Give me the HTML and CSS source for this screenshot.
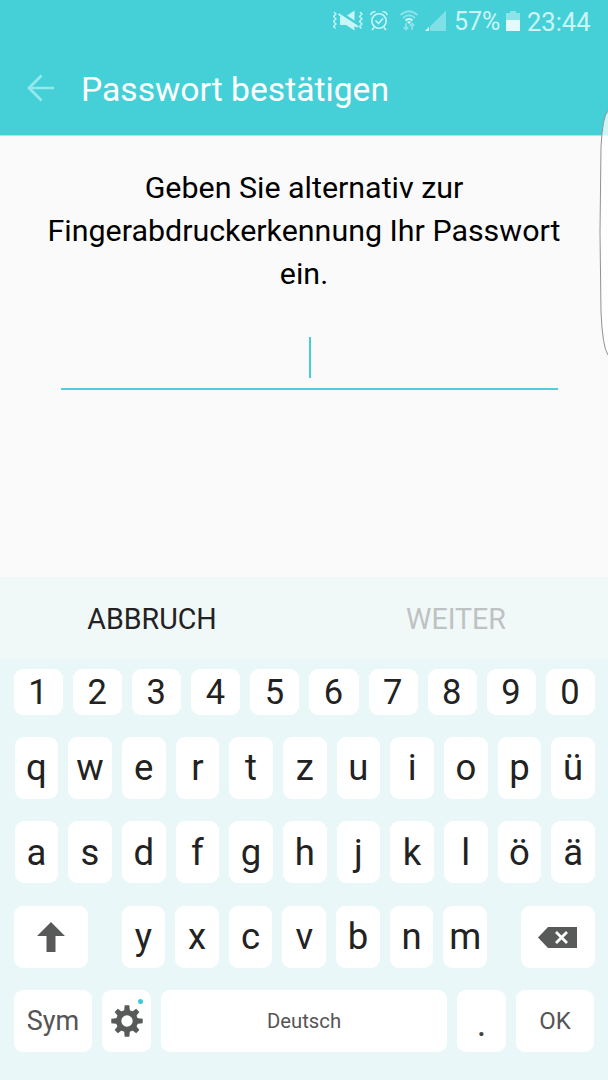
FILE: index.html
```
<!DOCTYPE html>
<html lang="de">
<head>
<meta charset="utf-8">
<title>Passwort bestätigen</title>
<link rel="stylesheet" href="styles.css">
</head>
<body>
<div class="screen">
  <header class="header">
    <div class="status">
      <svg class="status-icons" width="128" height="32" viewBox="0 0 128 32" fill="none">
        <g stroke="#c9f5f7" stroke-width="1.3">
          <path d="M1 12l2 2-2.500 2.500 2.500 2.500-2.500 2.500 2.500 2.500-2.500 2.500 2 2"/>
          <path d="M27 12l2 2-2.500 2.500 2.500 2.500-2.500 2.500 2.500 2.500-2.500 2.500 2 2"/>
        </g>
        <path fill="#c9f5f7" d="M14 15.500L21.500 10.500V20.500Z M7 16.500H10L24 25L25 27L21.500 26V30.500L13 25H7Z"/>
        <path stroke="#c9f5f7" stroke-width="2" d="M5.500 14L25 27"/>
        <g stroke="#c9f5f7" stroke-width="1.600">
          <circle cx="46" cy="21" r="7.200"/>
          <path d="M42.500 20.500l3 3 4.500-5M37.700 15Q38.500 12 42.500 11.500M49.500 11.500Q53.500 12 54.300 15M41 27.500l-2 2.500M51 27.500l2 2.500"/>
        </g>
        <g stroke="#8be3e8" stroke-width="1.700">
          <path d="M67.500 15Q76 7.500 84.500 15"/>
          <path d="M70 18Q76 12.500 82 18"/>
          <path d="M72.500 20.500Q76 17.500 79.500 20.500" stroke="#d9fafb"/>
          <path d="M73 23v6.500M70.700 27.200l2.300 2.300 2.300-2.300M79 30v-6.500M76.700 25.800l2.300-2.300 2.300 2.300"/>
        </g>
        <path fill="#d9fafb" d="M73.800 21.800Q76 20.500 78.200 21.800L76 24Z"/>
        <path fill="#7fe0e6" d="M97 26.500L113 10.500V31H97Z"/>
        <path fill="#e2fbfc" d="M92 31L96 27V31Z"/>
      </svg>
      <span class="percent">57%</span>
      <svg class="battery" width="14" height="20" viewBox="0 0 14 20">
        <path fill="#8ce4e9" d="M4 0H10V2H14V10H0V2H4Z"/>
        <path fill="#e2fafb" d="M0 9H14V20H0Z"/>
      </svg>
      <span class="clock">23:44</span>
    </div>
    <div class="titlebar">
      <svg class="back" width="28" height="28" viewBox="0 0 28 28" fill="none" stroke="#94e9ed" stroke-width="2.700">
        <path d="M14.500 1.500L2 14L14.500 26.500M2 14H27"/>
      </svg>
      <h1 class="title">Passwort bestätigen</h1>
    </div>
  </header>
  <main class="content">
    <p class="prompt">Geben Sie alternativ zur<br>Fingerabdruckerkennung Ihr Passwort<br>ein.</p>
    <div class="field"><span class="caret"></span></div>
  </main>
  <div class="actions">
    <button class="action">ABBRUCH</button>
    <button class="action disabled">WEITER</button>
  </div>
  <div class="keyboard">
    <div class="row digits">
      <span class="key">1</span><span class="key">2</span><span class="key">3</span><span class="key">4</span><span class="key">5</span><span class="key">6</span><span class="key">7</span><span class="key">8</span><span class="key">9</span><span class="key">0</span>
    </div>
    <div class="row letters">
      <span class="key">q</span><span class="key">w</span><span class="key">e</span><span class="key">r</span><span class="key">t</span><span class="key">z</span><span class="key">u</span><span class="key">i</span><span class="key">o</span><span class="key">p</span><span class="key">ü</span>
    </div>
    <div class="row letters">
      <span class="key">a</span><span class="key">s</span><span class="key">d</span><span class="key">f</span><span class="key">g</span><span class="key">h</span><span class="key">j</span><span class="key">k</span><span class="key">l</span><span class="key">ö</span><span class="key">ä</span>
    </div>
    <div class="row third">
      <span class="key wide"><svg width="28" height="30" viewBox="0 0 28 30"><path fill="#585a59" d="M14 0L28 14H18.500V30H9.500V14H0Z"/></svg></span>
      <div class="middle"><span class="key">y</span><span class="key">x</span><span class="key">c</span><span class="key">v</span><span class="key">b</span><span class="key">n</span><span class="key">m</span></div>
      <span class="key wide"><svg width="39" height="21" viewBox="0 0 39 21"><path fill="#585a59" d="M10 0H39V21H10L0 10.500Z"/><path stroke="#fff" stroke-width="2.800" d="M18 5L29 16M29 5L18 16"/></svg></span>
    </div>
    <div class="row bottom">
      <span class="key sym">Sym</span>
      <span class="key gear"><svg width="32" height="32" viewBox="-16 -16 32 32">
        <g fill="#585a59">
          <path d="M-3 -9L-2.300 -15.700H2.300L3 -9V9L2.300 15.700H-2.300L-3 9Z"/>
          <path transform="rotate(90)" d="M-3 -9L-2.300 -15.700H2.300L3 -9V9L2.300 15.700H-2.300L-3 9Z"/>
          <path transform="rotate(45)" d="M-3 -9L-2.300 -15.200H2.300L3 -9V9L2.300 15.200H-2.300L-3 9Z"/>
          <path transform="rotate(-45)" d="M-3 -9L-2.300 -15.200H2.300L3 -9V9L2.300 15.200H-2.300L-3 9Z"/>
          <circle r="11"/>
        </g>
        <circle r="5.700" fill="#fff"/></svg><i class="dot"></i></span>
      <span class="key space">Deutsch</span>
      <span class="key period">.</span>
      <span class="key ok">OK</span>
    </div>
  </div>
  <svg class="edge" width="10" height="250" viewBox="0 0 10 250">
    <path fill="#fff" fill-opacity=".75" stroke="none" d="M10 2Q4.500 7 3 38L2 123L3 203Q4.500 238 10 246Z"/>
    <path fill="none" stroke="#8b9494" stroke-width="1" d="M10 2Q4.500 7 3 38L2 123L3 203Q4.500 238 10 246"/>
  </svg>
</div>
</body>
</html>
```
FILE: styles.css
```
* { box-sizing: border-box; }
body { margin: 0; font-family: Roboto, sans-serif; }
.screen {
  position: relative;
  display: flex;
  flex-direction: column;
  width: 608px;
  height: 1080px;
  overflow: hidden;
  background: #fafafa;
}
.header {
  height: 136px;
  background: #45d0d8;
  border-bottom: 1px solid #b5e3e5;
}
.status {
  display: flex;
  justify-content: flex-end;
  align-items: center;
  height: 43px;
  padding-right: 17px;
  color: #cdf5f7;
  font-size: 25px;
  line-height: 44px;
}
.status-icons { align-self: flex-start; margin-right: -7px; }
.percent { width: 49px; margin-right: 3px; white-space: nowrap; }
.battery { margin: -1px 7px 0 0; }
.clock { width: 64px; font-size: 25.500px; white-space: nowrap; }
.titlebar { display: flex; align-items: center; height: 92px; padding-left: 27px; }
.back { margin-top: -2px; }
.title { margin: 0 0 0 26px; color: #fff; font-size: 33.650px; font-weight: 400; }
.content { height: 441px; padding-top: 31px; }
.prompt { margin: 0; text-align: center; color: #000; font-size: 30.400px; line-height: 42.800px; }
.field {
  width: 497px;
  height: 88px;
  margin: 6.600px 0 0 61px;
  padding-top: 35px;
  border-bottom: 2px solid #4fcfda;
}
.caret { display: block; width: 2px; height: 41px; margin: 0 auto; background: #45cdd8; }
.actions { display: grid; grid-template-columns: 1fr 1fr; height: 82px; background: #f1f8f8; }
.action { border: 0; padding: 1px 0 0; background: none; color: #222; font: 400 28.600px Roboto, sans-serif; }
.action.disabled { color: #bfc2c2; }
.keyboard { flex: 1; padding: 10px 13px 0 14px; background: #e9f7f9; }
.row { display: grid; column-gap: 10px; height: 62px; margin-bottom: 22.200px; }
.key {
  display: flex;
  align-items: center;
  justify-content: center;
  padding-top: 1px;
  border-radius: 9px;
  background: #fff;
  color: #222;
  font-size: 36.500px;
  line-height: 1;
}
.digits { grid-template-columns: repeat(10, 1fr); height: 46px; }
.digits .key { padding: 0 1px 0 0; font-size: 34.500px; }
.letters { grid-template-columns: repeat(11, 1fr); padding-left: .5px; }
.middle .key { padding-top: 2px; }
.third { grid-template-columns: 73.500px 1fr 73.500px; column-gap: 34px; padding-right: .5px; }
.middle { display: grid; grid-template-columns: repeat(7, 1fr); column-gap: 10px; }
.bottom { grid-template-columns: 78px 49px 1fr 49px 78px; margin: 0 1px 0 0; }
.bottom .key { color: #555; }
.bottom .sym { padding-top: 2px; font-size: 27px; }
.bottom .gear { padding-top: 0; }
.bottom .space { font-size: 20.300px; }
.bottom .ok { font-size: 24px; }
.bottom .period { padding-top: 6px; color: #444; }
.gear { position: relative; }
.dot { position: absolute; top: 9px; right: 8px; width: 5px; height: 5px; border-radius: 50%; background: #3acbd8; }
.edge { position: absolute; top: 109px; right: 0; }
```
